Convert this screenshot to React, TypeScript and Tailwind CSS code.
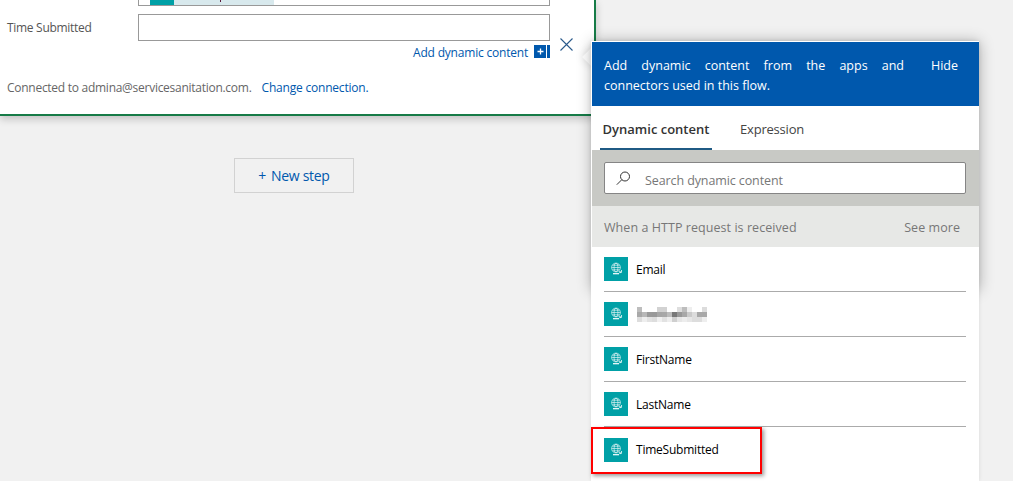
const FONT = "font-['Open_Sans','Noto_Sans',sans-serif]";

function GlobeIcon() {
  return (
    <div className="w-6 h-6 bg-[#00a0a6] shrink-0 flex items-center justify-center">
      <svg width="24" height="24" viewBox="0 0 24 24" fill="none" stroke="#ffffff" strokeWidth="0.6">
        <circle cx="12" cy="10.5" r="4.4" />
        <ellipse cx="12" cy="10.5" rx="2" ry="4.4" />
        <path d="M7.6 10.5h8.8M8.4 8.2h7.2M8.4 12.8h7.2" />
        <path d="M9 16.7h6" strokeWidth="1.2" />
        <path d="M15.2 14.4l2 .8M17.6 13l-.3 2.5-2.1.2" strokeWidth="0.8" />
      </svg>
    </div>
  );
}

const BLUR = [
  ["#bdbdbd", "#fff", "#fff", "#fff", "#d2d2d2", "#d2d2d2", "#fff", "#fff", "#dedede", "#bdbdbd", "#eeeeee", "#fff", "#fff", "#dcdcdc"],
  ["#a8a8a8", "#b8b8b8", "#9a9a9a", "#999999", "#a6a6a6", "#a8a8a8", "#bcbcbc", "#787878", "#989898", "#a8a8a8", "#cacaca", "#dcdcdc", "#a8a8a8", "#a8a8a8"],
  ["#dddddd", "#eeeeee", "#e2e2e2", "#dddddd", "#f0f0f0", "#e2e2e2", "#eeeeee", "#cfcfcf", "#e6e6e6", "#ededed", "#e6e6e6", "#dddddd", "#dddddd", "#eeeeee"],
];

function BlurredName() {
  return (
    <svg className="ml-px mt-px" width="70" height="15" viewBox="0 0 70 15" shapeRendering="crispEdges">
      {BLUR.map((row, y) =>
        row.map((c, x) => <rect key={`${x}-${y}`} x={x * 5} y={y * 5} width="5" height="5" fill={c} />)
      )}
    </svg>
  );
}

function Row({ name, last }: { name?: string; last?: boolean }) {
  return (
    <div className={`h-[45px] flex items-center gap-2 ${last ? "" : "border-b border-[#ababab]"}`}>
      <GlobeIcon />
      {name ? (
        <span className={`text-[12px] leading-4 font-medium text-black tracking-[-0.22px] ${last ? "" : "mt-[2px]"}`}>{name}</span>
      ) : (
        <BlurredName />
      )}
    </div>
  );
}

export default function App() {
  return (
    <div className={`relative w-[1013px] h-[481px] overflow-hidden bg-[#f1f1f1] ${FONT}`}>
      {/* flow card */}
      <div className="w-[596px] h-[116px] bg-white border-r-2 border-b-2 border-[#167b47] shadow-[0_3px_8px_rgba(0,0,0,0.2)] flex flex-col">
        <div className="ml-[138px] w-[412px] h-[6px] border-x border-b border-[#999999] pl-[11px] flex items-start">
          <div className="w-6 h-[5px] bg-[#00a0a6]" />
          <div className="w-[100px] h-[5px] bg-[#d8e9ed]">
            <div className="ml-[46px] w-px h-[2px] bg-[#5a1a3a]" />
          </div>
        </div>
        <div className="mt-[8px] flex items-center">
          <div className="w-[138px] pl-[7px] text-[12px] leading-4 text-[#555555] tracking-[-0.3px]">Time Submitted</div>
          <div className="w-[412px] h-[27px] border border-[#999999] bg-white" />
        </div>
        <div className="mt-[4px] flex items-start">
          <div className="w-[550px] flex justify-end items-start">
            <span className="mt-px mr-[6px] text-[12px] leading-[14px] text-[#0058ad] tracking-[-0.2px]">Add dynamic content</span>
            <div className="w-[12px] h-[13px] bg-[#0058ad] flex items-center justify-center">
              <svg width="7" height="7" viewBox="0 0 7 7" stroke="#ffffff" strokeWidth="1.3"><path d="M3.5 0.5v6M0.5 3.5h6" /></svg>
            </div>
            <div className="w-[3px] h-[13px] bg-[#0058ad] ml-px" />
          </div>
          <svg className="ml-[10px] -mt-[7px]" width="13" height="13" viewBox="0 0 13 13" fill="none" stroke="#2a5a8c" strokeWidth="1.1"><path d="M0.5 0.5l12 12M12.5 0.5l-12 12" /></svg>
        </div>
        <div className="mt-[20px] pl-[7px] flex items-center text-[12px] leading-4">
          <span className="text-[#666666] tracking-[-0.27px]">Connected to admina@servicesanitation.com.</span>
          <span className="ml-[10px] text-[#0058ad] tracking-[-0.2px]">Change connection.</span>
        </div>
      </div>

      {/* new step */}
      <div className="ml-[234px] mt-[42px] w-[120px] h-[35px] border border-[#d2d2d2] flex items-center justify-center text-[14px] text-[#0058ad] tracking-[-0.3px]">
        <span>+</span>
        <span className="ml-[5px]">New step</span>
      </div>

      {/* caret */}
      <div className="absolute left-[585px] top-[50px] w-[14px] h-[14px] rotate-45 bg-white shadow-[0_0_8px_rgba(0,0,0,0.15)]" />
      {/* stronger shadow on upper part of the panel */}
      <div className="absolute left-[592px] top-[42px] w-[387px] h-[248px] shadow-[0_0_14px_rgba(0,0,0,0.3)]" />

      {/* dynamic content panel */}
      <div className="absolute left-[591px] top-[41px] w-[388px] h-[440px] bg-white border-l border-t border-white shadow-[0_0_4px_rgba(0,0,0,0.1)] flex flex-col">
        <div className="h-[64px] bg-[#0058ad] text-white text-[12.5px] leading-5 pl-3 pr-5 pt-[14px]">
          <div className="flex">
            <div className="w-[300px] text-justify [text-align-last:justify]">Add dynamic content from the apps and</div>
            <div className="ml-[27px]">Hide</div>
          </div>
          <div>connectors used in this flow.</div>
        </div>
        <div className="h-[44px] flex text-[13px] items-stretch pl-2">
          <div className="w-[112px] border-b-2 border-[#1f5a84] flex items-center justify-center font-semibold text-[#333333] pt-[5px]">
            Dynamic content
          </div>
          <div className="ml-[28px] flex items-center text-[#444444] tracking-[-0.2px] pt-[3px]">Expression</div>
        </div>
        <div className="h-[56px] bg-[#c8c9c5] pl-3 pr-[13px] flex items-center">
          <div className="w-full h-8 bg-white border border-[#858585] rounded-[2px] flex items-center pl-[11px] gap-[14px]">
            <svg width="15" height="15" viewBox="0 0 15 15" fill="none" stroke="#333333" strokeWidth="1">
              <circle cx="9" cy="5.5" r="4.5" />
              <path d="M5.8 8.7L0.8 13.7" />
            </svg>
            <span className="mt-[5px] text-[12.5px] leading-4 text-[#777777] tracking-[-0.1px]">Search dynamic content</span>
          </div>
        </div>
        <div className="h-[41px] bg-[#e7e8e6] pl-3 pr-[19px] pt-[4px] flex items-center justify-between text-[12.5px] text-[#777777] tracking-[0.06px]">
          <span>When a HTTP request is received</span>
          <span>See more</span>
        </div>
        <div className="pl-3 pr-[13px]">
          <Row name="Email" />
          <Row />
          <Row name="FirstName" />
          <Row name="LastName" />
          <Row name="TimeSubmitted" last />
        </div>
      </div>

      {/* annotation */}
      <div className="absolute left-[591px] top-[427px] w-[171px] h-[47px] border-2 border-[#ff0000] shadow-[2px_2px_4px_rgba(0,0,0,0.4)]" />
    </div>
  );
}
